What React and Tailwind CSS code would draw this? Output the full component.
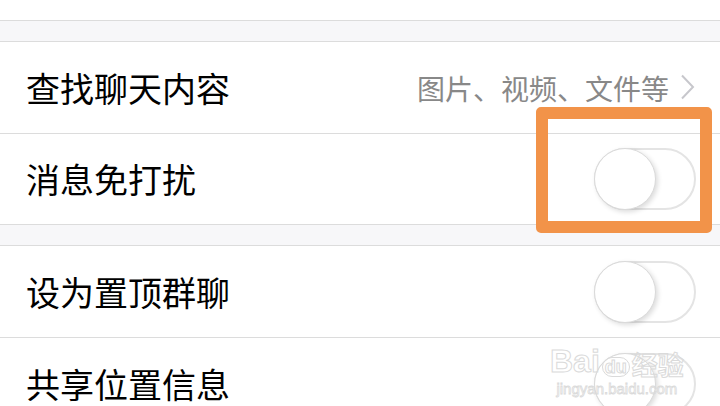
import React from "react";

const font = { fontFamily: '"Noto Sans CJK SC", "Noto Sans", sans-serif' };

function Toggle() {
  return (
    <div className="relative w-[102px] h-[62px] rounded-full border-2 border-[#e4e4e4] bg-white">
      <div className="absolute left-[-2px] top-[-2px] w-[62px] h-[62px] rounded-full bg-white border border-[#dadada] shadow-[2px_2px_5px_rgba(0,0,0,0.14)]" />
    </div>
  );
}

function Row({ label, right, toggle, border = true, h = "h-[92px]" }) {
  return (
    <div className={`flex items-center justify-between bg-white pl-[26px] pr-[24px] ${h} ${border ? "border-b border-[#dcdcdc]" : ""}`}>
      <span className="text-[34px] leading-none text-black">{label}</span>
      {right && (
        <div className="flex items-center gap-[11px] pr-[1px]">
          <span className="text-[28px] leading-none text-[#888888]">{right}</span>
          <svg width="15" height="26" viewBox="0 0 15 26" fill="none" className="-mt-[2px]">
            <path d="M2 1.5 L13 13 L2 24.5" stroke="#c7c7cc" strokeWidth="2" />
          </svg>
        </div>
      )}
      {toggle && <Toggle />}
    </div>
  );
}

export default function App() {
  return (
    <div className="relative w-[720px] h-[406px] overflow-hidden bg-white" style={font}>
      <div className="h-[20px] bg-white" />
      <div className="h-[22px] bg-[#f7f7f9] border-y border-[#dcdcdc]" />
      <Row label="查找聊天内容" right="图片、视频、文件等" />
      <Row label="消息免打扰" toggle border={false} h="h-[90px]" />
      <div className="h-[22px] bg-[#f7f7f9] border-y border-[#dcdcdc]" />
      <Row label="设为置顶群聊" toggle />
      <Row label="共享位置信息" toggle border={false} />

      <div className="absolute left-[536px] top-[107px] w-[176px] h-[126px] border-[12px] border-[#f29349] rounded-[5px]" />

      <div className="absolute left-[550px] top-[345px] flex flex-col items-center pointer-events-none">
        <div className="flex items-end gap-[2px]">
          <span className="text-[32px] leading-none font-bold text-transparent [-webkit-text-stroke:1px_#dadada]" style={{ fontFamily: '"Liberation Sans", sans-serif' }}>Bai</span>
          <span className="text-[18px] leading-none font-bold text-transparent [-webkit-text-stroke:1px_#dadada] border border-[#dadada] rounded-full px-[2px]" style={{ fontFamily: '"Liberation Sans", sans-serif' }}>du</span>
          <span className="text-[26px] leading-none font-bold text-transparent [-webkit-text-stroke:1px_#dadada]">经验</span>
        </div>
        <span className="mt-[4px] text-[15px] leading-none text-transparent [-webkit-text-stroke:0.8px_#dadada]" style={{ fontFamily: '"Liberation Sans", sans-serif' }}>jingyan.baidu.com</span>
      </div>
    </div>
  );
}
